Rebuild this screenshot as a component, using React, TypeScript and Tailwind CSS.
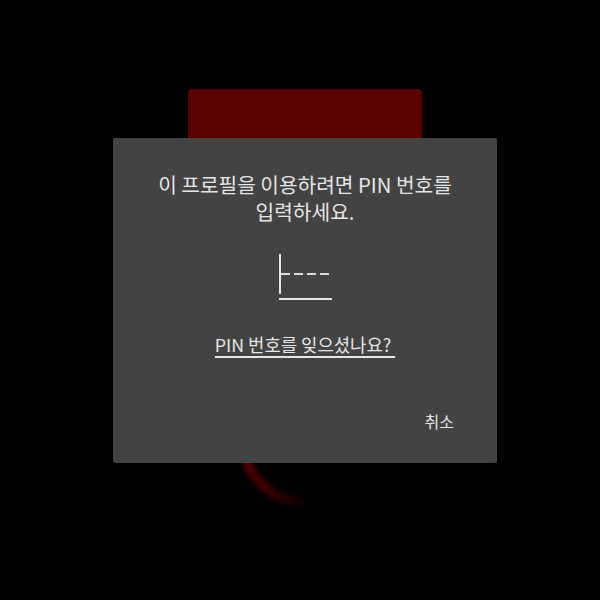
import type { ReactNode } from "react"

const font = { fontFamily: '"Noto Sans CJK KR", "Noto Sans", sans-serif' }

function SpinnerArc() {
  // partial loading ring peeking out under the dialog
  return (
    <svg className="absolute left-[230px] top-[440px]" width="100" height="80" viewBox="0 0 100 80">
      <defs>
        <linearGradient id="fade" x1="0" y1="0" x2="1" y2="1">
          <stop offset="0%" stopColor="#520000" />
          <stop offset="60%" stopColor="#3c0000" />
          <stop offset="100%" stopColor="#120000" />
        </linearGradient>
        <filter id="soft" x="-20%" y="-20%" width="140%" height="140%">
          <feGaussianBlur stdDeviation="2" />
        </filter>
      </defs>
      <path
        d="M13 0 A62 62 0 0 0 70 61.8"
        fill="none"
        stroke="url(#fade)"
        strokeWidth="10"
        strokeLinecap="round"
        filter="url(#soft)"
      />
    </svg>
  )
}

function PinField() {
  return (
    <div className="mx-auto flex w-[53px] flex-col">
      <div className="flex h-[40px] items-center">
        <div className="h-[40px] w-[2px] bg-[#e6e6e6]" />
        <div className="flex gap-[4px]">
          {[0, 1, 2, 3].map((i) => (
            <div key={i} className="h-[2px] w-[9px] bg-[#dcdcdc]" />
          ))}
        </div>
      </div>
      <div className="mt-[4px] h-[2px] w-[53px] bg-[#e6e6e6]" />
    </div>
  )
}

function Dialog({ children }: { children: ReactNode }) {
  return (
    <div className="absolute inset-0 flex items-center justify-center pl-[10px]">
      <div className="w-[384px] rounded-[2px] bg-[#434343] px-[36px] pb-[30px] pt-[33px] text-[#e6e6e6]">
        {children}
      </div>
    </div>
  )
}

export default function App() {
  return (
    <div className="relative h-[600px] w-[600px] overflow-hidden bg-black" style={font}>
      {/* profile card behind the overlay */}
      <div className="absolute left-[188px] top-[89px] h-[160px] w-[234px] rounded-t-[4px] bg-[#5a0000]" />
      <SpinnerArc />

      <Dialog>
        <p className="break-keep text-center text-[20.25px] leading-[27px]">
          이 프로필을 이용하려면 PIN 번호를 입력하세요.
        </p>
        <div className="mt-[29px]">
          <PinField />
        </div>
        <div className="mt-[32px] text-center text-[17.75px] leading-[24px]">
          <span className="underline decoration-[1.5px] underline-offset-[4px]">PIN 번호를 잊으셨나요?&nbsp;</span>
        </div>
        <div className="mt-[53px] flex justify-end pr-[7px] text-[16px] leading-[24px]">
          <span>취소</span>
        </div>
      </Dialog>
    </div>
  )
}
